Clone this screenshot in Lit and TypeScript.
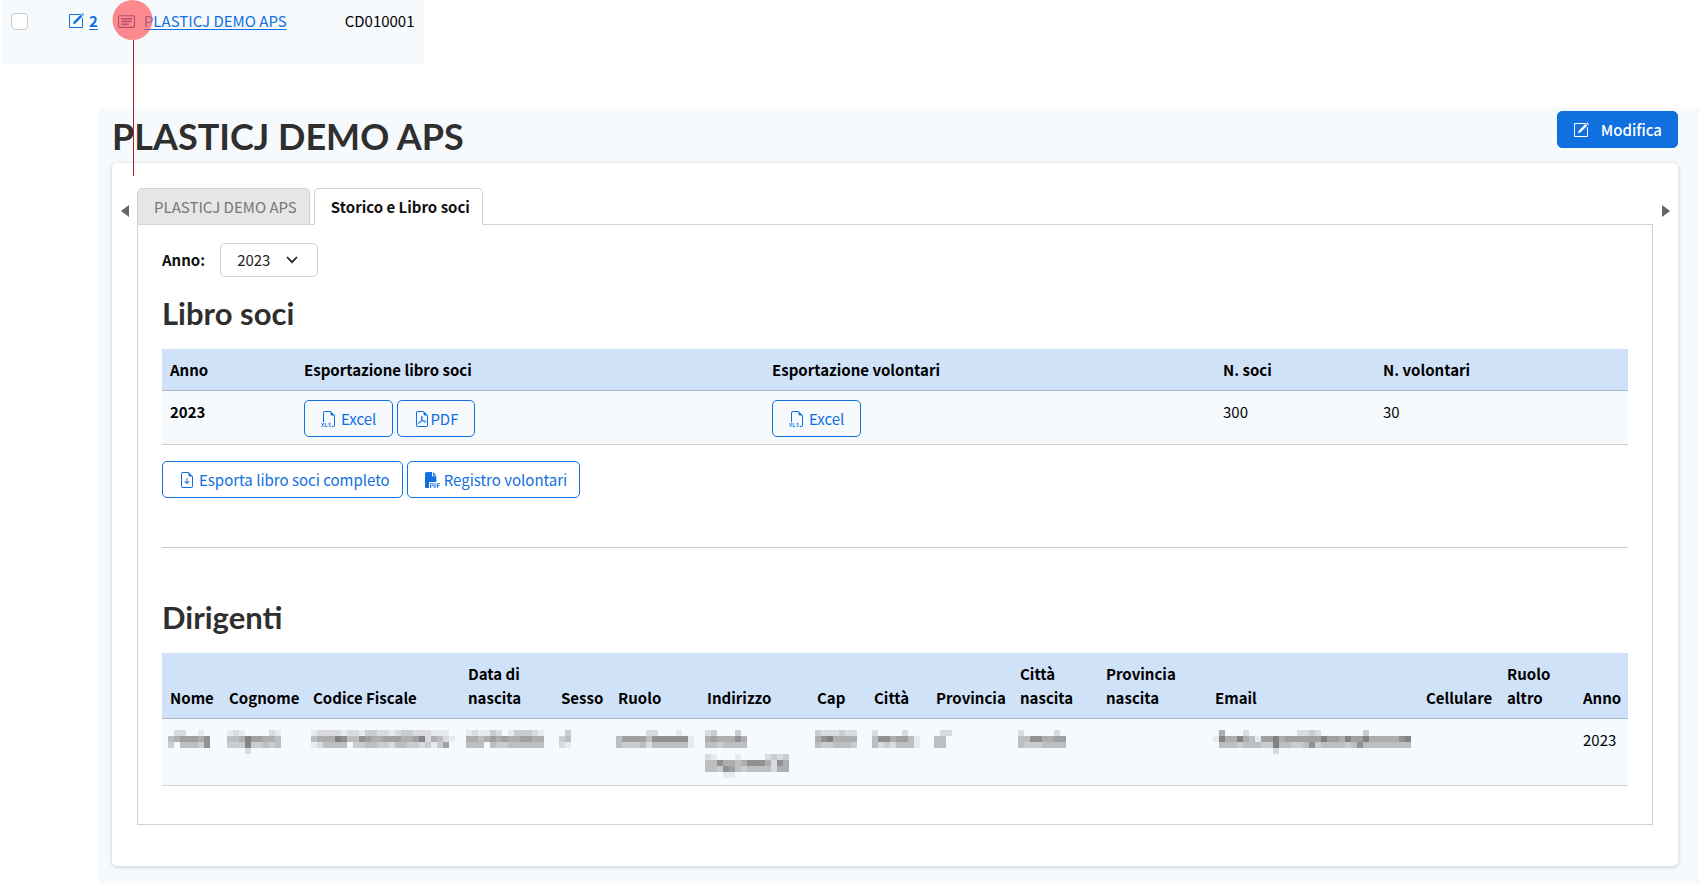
import { LitElement, html, css, svg } from "lit";
import { customElement } from "lit/decorators.js";
import { styleMap } from "lit/directives/style-map.js";

type Blur = { rows: string[] };

// Redacted values: each character is one 6px cell, 0 = empty, 9 = darkest.
const people: { label: string; weight: number; value?: string; blur?: Blur }[] = [
  { label: "Nome", weight: 59, blur: { rows: ["0220010", "4566657", "3044437"] } },
  { label: "Cognome", weight: 84, blur: { rows: ["121000021", "445866554", "333833434", "000200000"] } },
  { label: "Codice Fiscale", weight: 155, blur: { rows: ["122221221332212332221110", "455587447655666556825421", "124444033443324433231360"] } },
  { label: "Data di nascita", weight: 93, blur: { rows: ["1211320133321", "5545656556655", "4440433444444"] } },
  { label: "Sesso", weight: 57, blur: { rows: ["03", "34", "21"] } },
  { label: "Ruolo", weight: 89, blur: { rows: ["0000022000100", "4666647777771", "4333424444441"] } },
  { label: "Indirizzo", weight: 110, blur: { rows: ["23000300000000", "56555750000000", "44344440000000", "00000000000000", "21000100002323", "44755457775275", "44376434444255", "00011000000000"] } },
  { label: "Cap", weight: 57, blur: { rows: ["3222322", "5785555", "4334443"] } },
  { label: "Città", weight: 62, blur: { rows: ["20000200", "47756641", "42324441"] } },
  { label: "Provincia", weight: 84, blur: { rows: ["022", "440", "440"] } },
  { label: "Città nascita", weight: 86, blur: { rows: ["20000020", "44775566", "43334444"] } },
  { label: "Provincia nascita", weight: 109 },
  { label: "Email", weight: 211, blur: { rows: ["050002000000002232000000030000000", "185585416685666666866586685555578", "044434443384433473444434744444444", "000000000020000000000000000000000"] } },
  { label: "Cellulare", weight: 81 },
  { label: "Ruolo altro", weight: 76 },
  { label: "Anno", weight: 53, value: "2023" },
];
const books = [134, 468, 451, 160, 253];

const cols = (weights: number[]) => {
  const total = weights.reduce((a, b) => a + b, 0);
  return html`<colgroup>${weights.map((w) => html`<col style=${styleMap({ width: `${(w / total) * 100}%` })} />`)}</colgroup>`;
};

const mosaic = (b: Blur) => {
  const w = b.rows[0].length * 6;
  const h = b.rows.length * 6;
  return html`<svg class="mosaic" width=${w} height=${h} viewBox="0 0 ${w} ${h}" role="img" aria-label="Dato oscurato" shape-rendering="crispEdges">
    ${b.rows.map((r, y) => [...r].map((c, x) => c === "0" ? null
      : svg`<rect x=${x * 6} y=${y * 6} width="6" height="6" fill="#000" fill-opacity=${Number(c) * 0.06}></rect>`))}
  </svg>`;
};

const icon = (body: unknown) => html`<svg class="icon" viewBox="0 0 16 16" fill="currentColor" aria-hidden="true">${body}</svg>`;

const pencil = svg`<path fill="none" stroke="currentColor" d="M12.6 1.5H1.5v13h13V5.2"/><path d="M5.1 11.3l.6-2.6 6.9-7 1.8 1.8-7 6.9zM13.2 1.1l.9-.9 1.8 1.8-.9.9z"/>`;
const card = svg`<path d="M14.5 3a.5.5 0 0 1 .5.5v9a.5.5 0 0 1-.5.5h-13a.5.5 0 0 1-.5-.5v-9a.5.5 0 0 1 .5-.5zm-13-1A1.500 1.500 0 0 0 0 3.500v9A1.500 1.500 0 0 0 1.500 14h13a1.500 1.500 0 0 0 1.500-1.500v-9A1.500 1.500 0 0 0 14.500 2z"/><path stroke="currentColor" stroke-width=".4" d="M3 5.500a.5.5 0 0 1 .5-.5h9a.5.5 0 0 1 0 1h-9a.5.5 0 0 1-.5-.5M3 8a.5.5 0 0 1 .5-.5h9a.5.5 0 0 1 0 1h-9A.5.5 0 0 1 3 8m0 2.500a.5.5 0 0 1 .5-.5h6a.5.5 0 0 1 0 1h-6a.5.5 0 0 1-.5-.5"/>`;
const xls = svg`<path fill-rule="evenodd" d="M14 4.500V14a2 2 0 0 1-2 2h-1v-1h1a1 1 0 0 0 1-1V4.500h-2A1.500 1.500 0 0 1 9.500 3V1H4a1 1 0 0 0-1 1v9H2V2a2 2 0 0 1 2-2h5.500z"/><path fill="none" stroke="currentColor" stroke-width=".8" d="M.5 12l2.400 3.800M2.900 12L.5 15.800M4.300 12v3.500h2M9.700 12.600c-.6-.8-2-.6-2 .3 0 1.100 2.100.7 2.100 1.800 0 1-1.700 1.100-2.300.2"/>`;
const pdf = svg`<path d="M14 14V4.500L9.500 0H4a2 2 0 0 0-2 2v12a2 2 0 0 0 2 2h8a2 2 0 0 0 2-2M9.500 3A1.500 1.500 0 0 0 11 4.500h2V14a1 1 0 0 1-1 1H4a1 1 0 0 1-1-1V2a1 1 0 0 1 1-1h5.500z"/><path fill="none" stroke="currentColor" stroke-width=".9" d="M7.900 5.200c-.8 0-.6 1.500 0 2.900.7 1.700 2.100 3.200 3.300 3.100 1-.1.8-1.200-.4-1.300-2-.1-4 .4-5.700 1.400-1.300.8-.7 1.800.2 1.100C6.500 11.200 8 8.300 8.300 6.500c.1-.8 0-1.300-.4-1.300z"/>`;
const down = svg`<path d="M8.500 6.500a.5.5 0 0 0-1 0v3.800L6.350 9.150a.5.5 0 1 0-.7.7l2 2a.5.5 0 0 0 .7 0l2-2a.5.5 0 0 0-.7-.7L8.500 10.300z"/><path d="M14 14V4.500L9.500 0H4a2 2 0 0 0-2 2v12a2 2 0 0 0 2 2h8a2 2 0 0 0 2-2M9.500 3A1.500 1.500 0 0 0 11 4.500h2V14a1 1 0 0 1-1 1H4a1 1 0 0 1-1-1V2a1 1 0 0 1 1-1h5.500z"/>`;
const pdfFill = svg`<path d="M3 0h5v4.200h4.300V10H5v6H2A1 1 0 0 1 1 15V1.500Q1 0 3 0zM9 0l3.300 3.400H9z"/><path fill="none" stroke="currentColor" stroke-width=".9" d="M6.500 16v-4.500h1.100a1.200 1.200 0 0 1 0 2.500H6.500M10 11.500v4h.7c1.800 0 1.800-4 0-4zM13.600 16v-4.500H16M13.600 13.600h2"/>`;

@customElement("app-root")
export class AppRoot extends LitElement {
  static styles = css`
    :host {
      display: flex;
      flex-direction: column;
      position: relative;
      min-height: 100vh;
      background: #fff;
      color: #000;
      font: 15px/24px "Noto Sans CJK SC", "Noto Sans", sans-serif;
      --blue: #1070e0;
      --pale: #f7fafd;
      --edge: #d0d2d4;
    }
    * { box-sizing: border-box; }
    svg { display: block; flex: none; }
    button, select { font: inherit; }
    a { color: var(--blue); text-underline-offset: 2px; }
    .icon { width: 16px; height: 16px; }
    .strip {
      display: flex;
      align-items: flex-start;
      align-self: flex-start;
      gap: 20px;
      height: 64px;
      margin-left: 2px;
      padding: 9px 9px 0;
      background: var(--pale);
    }
    .strip > * { display: flex; align-items: center; height: 24px; }
    .tick {
      appearance: none;
      width: 17px;
      height: 17px;
      margin: 0;
      border: 1px solid #c9cbce;
      border-radius: 4px;
      background: #fff;
    }
    .num { gap: 5px; margin-left: 20px; color: var(--blue); font-weight: 700; }
    .name { gap: 9px; color: var(--blue); }
    .name .icon { width: 17px; height: 17px; color: #2b4a9a; }
    .code { margin-left: 38px; }
    .mark { position: absolute; left: 112px; top: 0; }
    .page {
      flex: 1;
      margin: 44px 0 0 99px;
      padding: 3px 21px 19px 13px;
      background: var(--pale);
    }
    .top { display: flex; justify-content: space-between; align-items: flex-start; height: 52px; }
    h1, h2 { margin: 0; color: #2f2f2f; font-family: Lato, sans-serif; font-weight: 700; }
    h1 { font-size: 36px; line-height: 50px; }
    h2 { font-size: 31px; line-height: 36px; }
    .btn {
      display: inline-flex;
      align-items: center;
      height: 37px;
      padding: 0 16px;
      gap: 4px;
      border: 1px solid var(--blue);
      border-radius: 5px;
      background: transparent;
      color: var(--blue);
    }
    .btn.tight { gap: 0; }
    .btn.solid { padding: 0 15px; gap: 12px; background: var(--blue); color: #fff; font-weight: 500; }
    .card {
      display: grid;
      grid-template-columns: 25px minmax(0, 1fr) 25px;
      padding: 25px 0 41px;
      border-radius: 5px;
      background: #fff;
      box-shadow: 0 1px 4px rgba(0, 0, 0, 0.2);
    }
    .arrow { display: grid; justify-content: center; align-content: start; padding: 17px 0 0; border: 0; background: none; color: #666; }
    .tabs { display: flex; gap: 4px; }
    .tab {
      height: 37px;
      margin-bottom: -1px;
      padding: 0 12px 0 16px;
      border: 1px solid var(--edge);
      border-radius: 5px 5px 0 0;
      background: #e6e6e6;
      color: #777;
    }
    .tab.on { position: relative; border-bottom-color: #fff; background: #fff; color: #111; font-weight: 700; }
    .panel { padding: 18px 24px 38px; border: 1px solid var(--edge); }
    .filter { display: flex; align-items: center; gap: 15px; margin-bottom: 18px; }
    .filter label { font-weight: 700; color: #111; }
    .pick { display: grid; align-items: center; }
    .pick > * { grid-area: 1 / 1; }
    select {
      appearance: none;
      width: 98px;
      height: 34px;
      padding: 0 16px;
      border: 1px solid var(--edge);
      border-radius: 5px;
      background: #fff;
      color: #222;
    }
    .pick svg { justify-self: end; margin-right: 20px; pointer-events: none; }
    table { width: 100%; table-layout: fixed; border-collapse: separate; border-spacing: 0; margin-top: 18px; }
    th, td { padding: 9px 8px 7px; text-align: left; vertical-align: top; border-bottom: 1px solid #cfd1d4; }
    th { font-weight: 700; }
    thead th { padding-bottom: 8px; background: #d0e2f8; vertical-align: bottom; border-bottom-color: #abb9cd; }
    tbody th, tbody td { background: var(--pale); }
    .people td { height: 66px; padding-right: 0; }
    .mosaic { margin: 2px 0 0 -2px; }
    .pair { display: flex; gap: 4px; }
    .after { margin-top: 16px; }
    .after .btn { padding-right: 12px; }
    hr { margin: 49px 0 51px; border: 0; border-top: 1px solid #c9cbce; }
  `;

  render() {
    return html`
      <div class="strip">
        <span><input class="tick" type="checkbox" aria-label="Seleziona riga 2" /></span>
        <span class="num">${icon(pencil)}<a href="#modifica">2</a></span>
        <span class="name">${icon(card)}<a href="#scheda">PLASTICJ DEMO APS</a></span>
        <span class="code">CD010001</span>
      </div>
      <main class="page">
        <header class="top">
          <h1>PLASTICJ DEMO APS</h1>
          <button class="btn solid">${icon(pencil)}Modifica</button>
        </header>
        <section class="card">
          <button class="arrow" aria-label="Scheda precedente"><svg width="8" height="12"><path d="M8 0v12L0 6z" fill="currentColor" /></svg></button>
          <div>
            <div class="tabs" role="tablist">
              <button class="tab" role="tab" aria-selected="false">PLASTICJ DEMO APS</button>
              <button class="tab on" role="tab" aria-selected="true">Storico e Libro soci</button>
            </div>
            <div class="panel" role="tabpanel">
              <div class="filter">
                <label for="anno">Anno:</label>
                <span class="pick">
                  <select id="anno"><option>2023</option></select>
                  <svg width="12" height="8" viewBox="0 0 12 8" fill="none" stroke="#222" stroke-width="1.7"><path d="M1 1l5 5.200L11 1" /></svg>
                </span>
              </div>
              <h2>Libro soci</h2>
              <table>
                ${cols(books)}
                <thead><tr><th>Anno</th><th>Esportazione libro soci</th><th>Esportazione volontari</th><th>N. soci</th><th>N. volontari</th></tr></thead>
                <tbody>
                  <tr>
                    <th scope="row">2023</th>
                    <td><div class="pair"><button class="btn">${icon(xls)}Excel</button><button class="btn tight">${icon(pdf)}PDF</button></div></td>
                    <td><div class="pair"><button class="btn">${icon(xls)}Excel</button></div></td>
                    <td>300</td>
                    <td>30</td>
                  </tr>
                </tbody>
              </table>
              <div class="pair after">
                <button class="btn">${icon(down)}Esporta libro soci completo</button>
                <button class="btn">${icon(pdfFill)}Registro volontari</button>
              </div>
              <hr />
              <h2>Dirigenti</h2>
              <table class="people">
                ${cols(people.map((p) => p.weight))}
                <thead><tr>${people.map((p) => html`<th>${p.label}</th>`)}</tr></thead>
                <tbody><tr>${people.map((p) => html`<td>${p.blur ? mosaic(p.blur) : p.value}</td>`)}</tr></tbody>
              </table>
            </div>
          </div>
          <button class="arrow" aria-label="Scheda successiva"><svg width="8" height="12"><path d="M0 0v12l8-6z" fill="currentColor" /></svg></button>
        </section>
      </main>
      <svg class="mark" width="42" height="176" aria-hidden="true">
        <circle cx="20.500" cy="20" r="20" fill="#ff4f55" fill-opacity=".66" />
        <path d="M21.500 40v136" stroke="#b51f28" />
      </svg>
    `;
  }
}
